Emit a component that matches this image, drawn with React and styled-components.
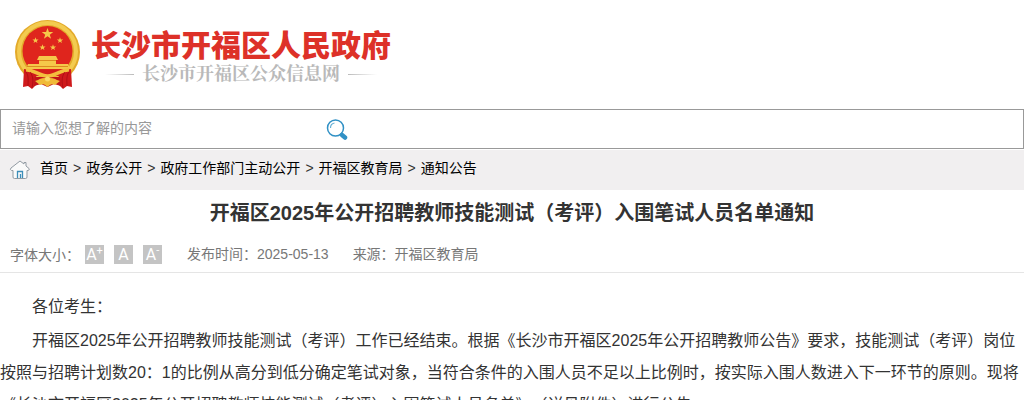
import styled, { createGlobalStyle } from 'styled-components';

const GlobalStyle = createGlobalStyle`
  * {
    box-sizing: border-box;
  }

  body {
    margin: 0;
    background-color: #fff;
    color: #333;
    font-family: "Liberation Sans", "Noto Sans CJK SC", sans-serif;
    font-size: 14px;
    text-spacing-trim: space-all;
  }
`;

const Header = styled.header`
  display: flex;
  padding: 19px 14px;
`;

const HomeLink = styled.a`
  display: flex;
  align-items: flex-start;
  gap: 10px;
  text-decoration: none;
`;

const SiteName = styled.span`
  display: flex;
  flex-direction: column;
  align-items: center;
  padding-top: 10px;
`;

const SiteTitle = styled.span`
  color: #dd3128;
  font-size: 30px;
  line-height: 34px;
  font-weight: 900;
`;

const SiteSubtitle = styled.span`
  display: flex;
  align-items: center;
  gap: 8px;
  color: #b9b9b9;
  font-family: "Liberation Serif", "Noto Serif CJK SC", "Noto Sans CJK SC", serif;
  font-size: 18px;
  line-height: 22px;
  font-weight: 700;

  &::before,
  &::after {
    content: '';
    width: 29px;
    height: 1px;
    background: linear-gradient(to right, transparent, #bbb);
  }

  &::after {
    background: linear-gradient(to left, transparent, #bbb);
  }
`;

const SearchForm = styled.form`
  display: flex;
  align-items: center;
  height: 40px;
  margin-bottom: 1px;
  border: 1px solid #999;
`;

const SearchInput = styled.input`
  width: 315px;
  height: 36px;
  padding: 0 11px 2px;
  border: 0;
  outline: 0;
  background: none;
  color: #333;
  font: inherit;

  &::placeholder {
    color: #999;
  }
`;

const SearchButton = styled.button`
  display: flex;
  padding: 2px 10px 0;
  border: 0;
  background: none;
  cursor: pointer;
`;

const Breadcrumb = styled.nav`
  display: flex;
  align-items: center;
  gap: 9px;
  height: 40px;
  padding: 0 9px;
  background-color: #f1eff0;
`;

const Crumbs = styled.div`
  display: flex;
  gap: 5px;
  padding-bottom: 4px;
  line-height: 20px;
`;

const Crumb = styled.a`
  color: #000;
  text-decoration: none;
`;

const Title = styled.h1`
  margin: 0;
  padding: 7px 10px;
  font-size: 20px;
  line-height: 32px;
  font-weight: 700;
  text-align: center;
`;

const Meta = styled.div`
  display: flex;
  align-items: center;
  height: 37px;
  padding: 0 10px;
  border-bottom: 1px solid #e5e5e5;
  color: #777;
`;

const MetaItem = styled.span`
  margin-right: 24px;
  line-height: 20px;
`;

const FontSizes = styled.div`
  display: flex;
  align-items: center;
  gap: 10px;
  margin: 1px 25px 0 5px;
`;

const FontButton = styled.button`
  display: flex;
  justify-content: center;
  width: 19px;
  height: 19px;
  padding: 0;
  border: 0;
  background-color: #c4c4c4;
  color: #fff;
  font-family: Roboto, "Liberation Sans", sans-serif;
  font-size: 16px;
  line-height: 20px;
  cursor: pointer;

  sup {
    font-size: 11px;
    line-height: 11px;
  }
`;

const Content = styled.div`
  padding-top: 18px;
  font-size: 16px;
  line-height: 32px;
`;

const Paragraph = styled.p`
  margin: 0 0 2px;
  text-indent: 2em;
`;

const crumbs = ['首页', '政务公开', '政府工作部门主动公开', '开福区教育局', '通知公告'];

const star = '0,-5 1.2,-1.6 4.8,-1.6 1.9,.6 3,4 0,1.9 -3,4 -1.9,.6 -4.8,-1.6 -1.2,-1.6';

function Emblem() {
  return (
    <svg width="67" height="71" viewBox="0 0 67 71" aria-hidden="true">
      <ellipse cx="33.5" cy="33" rx="32.5" ry="32" fill="#e3aa2a" />
      <circle cx="33.5" cy="32.5" r="28.5" fill="none" stroke="#f3cb50" strokeWidth="4" />
      <circle cx="33.5" cy="32" r="25" fill="#df251d" />
      <g fill="#f5c84a">
        <polygon points={star} transform="translate(33.5 15) scale(1.2)" />
        <polygon points={star} transform="translate(21.5 21.5) scale(.65)" />
        <polygon points={star} transform="translate(46 21.5) scale(.65)" />
        <polygon points={star} transform="translate(28.5 28.5) scale(.65)" />
        <polygon points={star} transform="translate(39 28.5) scale(.65)" />
        <path d="M25 37h17l2 4h-2v4h12l2 5H12l2-5h11v-4h-2z" />
      </g>
      <path d="M13 47.500h41M25 41.500h17" stroke="#dc8a20" />
      <path d="M15 51h37l-6 6H21z" fill="#d51f1b" />
      <path d="M10 50c5 0 11 3 13 9l-1 7-4 4-4-3-5 1z" fill="#cf1a1c" />
      <path d="M57 50c-5 0-11 3-13 9l1 7 4 4 4-3 5 1z" fill="#cf1a1c" />
      <path d="M21 58h25l1 9-7-2-6.500 3-6.500-3-7 2z" fill="#c0151a" />
      <path d="M12 51c8-1 12 6 21.500 6S47 50 55 51" fill="none" stroke="#f3bf3e" strokeWidth="3.500" />
      <path d="M24 61c4-3 15-3 19 0l3 1-5 4c-2-1-4-1-5 0l-2.500 2-2.500-2c-1-1-3-1-5 0l-5-4z" fill="#f0ba38" />
      <path d="M12 53c3 4 2 9 2 14M16 53c4 5 3 11 2 16M55 53c-3 4-2 9-2 14M51 53c-4 5-3 11-2 16" fill="none" stroke="#a70c13" strokeWidth=".8" />
      <circle cx="33.5" cy="60" r="2.500" fill="#f9d968" />
    </svg>
  );
}

function SearchIcon() {
  return (
    <svg width="22" height="22" viewBox="0 0 22 22" fill="none" aria-hidden="true">
      <circle cx="9.5" cy="9" r="8" stroke="#3191c5" strokeWidth="1.500" />
      <path d="M4.500 9a5 5 0 0 1 4-5" stroke="#65afd5" strokeWidth="1.200" />
      <path d="m14.800 14.800 1.700 1.700" stroke="#3191c5" strokeWidth="2" />
      <path d="m16 16 3 2.500" stroke="#3191c5" strokeWidth="4.500" strokeLinecap="round" />
    </svg>
  );
}

function HomeIcon() {
  return (
    <svg width="22" height="20" viewBox="0 0 22 20" fill="none" aria-hidden="true">
      <path d="M4 10.500H2.500Q.5 9.500 2 8L11 1l4 3V2.500h2V6l3 2.500q1 1.500-1 2h-1V17q0 1.500-1.500 1.500h-11Q4 18.500 4 17z" fill="#fafafa" stroke="#929ba3" />
      <path d="M8.500 18v-6.500h5V18M11.500 14v4" stroke="#3b8db9" strokeWidth="1.300" />
    </svg>
  );
}

function App() {
  return (
    <>
      <GlobalStyle />
      <Header>
        <HomeLink href="#">
          <Emblem />
          <SiteName>
            <SiteTitle>长沙市开福区人民政府</SiteTitle>
            <SiteSubtitle>长沙市开福区公众信息网</SiteSubtitle>
          </SiteName>
        </HomeLink>
      </Header>

      <SearchForm onSubmit={(e) => e.preventDefault()}>
        <SearchInput type="text" aria-label="搜索" placeholder="请输入您想了解的内容" />
        <SearchButton type="submit" aria-label="搜索">
          <SearchIcon />
        </SearchButton>
      </SearchForm>

      <Breadcrumb>
        <HomeIcon />
        <Crumbs>
          {crumbs.map((name, i) => [
            i > 0 && <span key={`${name}-sep`}>&gt;</span>,
            <Crumb key={name} href="#">{name}</Crumb>,
          ])}
        </Crumbs>
      </Breadcrumb>

      <main>
        <Title>开福区2025年公开招聘教师技能测试（考评）入围笔试人员名单通知</Title>
        <Meta>
          <span>字体大小：</span>
          <FontSizes>
            <FontButton type="button" aria-label="放大字体">A<sup>+</sup></FontButton>
            <FontButton type="button" aria-label="默认字体">A</FontButton>
            <FontButton type="button" aria-label="缩小字体">A<sup>-</sup></FontButton>
          </FontSizes>
          <MetaItem>发布时间：2025-05-13</MetaItem>
          <MetaItem>来源：开福区教育局</MetaItem>
        </Meta>
        <Content>
          <Paragraph>各位考生：</Paragraph>
          <Paragraph>
            开福区2025年公开招聘教师技能测试（考评）工作已经结束。根据《长沙市开福区2025年公开招聘教师公告》要求，技能测试（考评）岗位按照与招聘计划数20：1的比例从高分到低分确定笔试对象，当符合条件的入围人员不足以上比例时，按实际入围人数进入下一环节的原则。现将《长沙市开福区2025年公开招聘教师技能测试（考评）入围笔试人员名单》（详见附件）进行公告。
          </Paragraph>
        </Content>
      </main>
    </>
  );
}

export default App;
